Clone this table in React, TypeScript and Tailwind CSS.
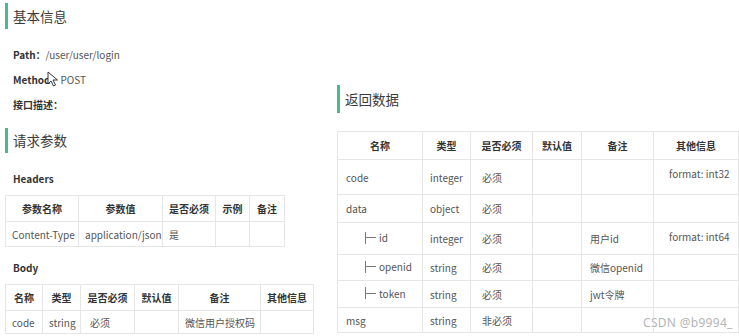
import React from 'react';

const font = { fontFamily: '"Noto Sans CJK SC", "Noto Sans", sans-serif' };

const SectionTitle: React.FC<{ children: React.ReactNode; className?: string }> = ({ children, className = '' }) => (
  <div className={`flex items-center border-l-[3px] border-[#4cb98c] pl-[5px] text-[13.5px] text-[#3a3a3a] ${className}`}>
    {children}
  </div>
);

const Branch: React.FC<{ label: string }> = ({ label }) => (
  <span className="inline-flex items-center pl-[19px]">
    <span className="inline-block h-[12px] w-px bg-[#777]" />
    <span className="inline-block h-px w-[10px] bg-[#777]" />
    <span className="ml-[3px]">{label}</span>
  </span>
);

const th = 'whitespace-nowrap border border-[#e6e6e6] p-0 text-center font-bold text-[#333]';
const td = 'whitespace-nowrap overflow-hidden border border-[#e6e6e6] px-[6px] py-0 text-left text-[#555]';

const headerRows = [['Content-Type', 'application/json', '是', '', '']];

type Field = { name: React.ReactNode; type: string; req: string; note: string; extra: string; h: string };

const responseRows: Field[] = [
  { name: 'code', type: 'integer', req: '必须', note: '', extra: 'format: int32', h: 'h-[35px]' },
  { name: 'data', type: 'object', req: '必须', note: '', extra: '', h: 'h-[28px]' },
  { name: <Branch label="id" />, type: 'integer', req: '必须', note: '用户id', extra: 'format: int64', h: 'h-[32px]' },
  { name: <Branch label="openid" />, type: 'string', req: '必须', note: '微信openid', extra: '', h: 'h-[26px]' },
  { name: <Branch label="token" />, type: 'string', req: '必须', note: 'jwt令牌', extra: '', h: 'h-[27px]' },
  { name: 'msg', type: 'string', req: '非必须', note: '', extra: '', h: 'h-[25px]' },
];

export default function App() {
  return (
    <div className="relative h-[336px] w-[739px] overflow-hidden bg-white text-[10px]" style={font}>
      <div className="flex">
        {/* left column: basic info + request params */}
        <div className="w-[337px] shrink-0 pl-[5px]">
          <SectionTitle className="mt-[3px] h-[26px]">基本信息</SectionTitle>
          <div className="mt-[13px] pl-[8px] text-[10px] text-[#555]">
            <div className="flex h-[25px] items-center">
              <span className="font-bold text-[#333]">Path：</span>
              <span>/user/user/login</span>
            </div>
            <div className="flex h-[25px] items-center">
              <span className="font-bold text-[#333]">Method：</span>
              <span>POST</span>
            </div>
            <div className="flex h-[25px] items-center">
              <span className="font-bold text-[#333]">接口描述：</span>
            </div>
          </div>

          <SectionTitle className="mt-[11px] h-[25px]">请求参数</SectionTitle>
          <div className="mt-[15px] flex h-[20px] items-center pl-[8px] font-bold text-[#333]">Headers</div>
          <table className="mt-[7px] w-[279px] table-fixed border-collapse">
            <colgroup>
              <col className="w-[73px]" />
              <col className="w-[84px]" />
              <col className="w-[53px]" />
              <col className="w-[34px]" />
              <col className="w-[35px]" />
            </colgroup>
            <thead>
              <tr className="h-[26px]">
                {['参数名称', '参数值', '是否必须', '示例', '备注'].map((c) => (
                  <th key={c} className={th}>{c}</th>
                ))}
              </tr>
            </thead>
            <tbody>
              {headerRows.map((r) => (
                <tr key={r[0]} className="h-[25px]">
                  {r.map((c, i) => (
                    <td key={i} className={td}>{c}</td>
                  ))}
                </tr>
              ))}
            </tbody>
          </table>

          <div className="mt-[10px] flex h-[20px] items-center pl-[8px] font-bold text-[#333]">Body</div>
          <table className="mt-[7px] w-[308px] table-fixed border-collapse">
            <colgroup>
              <col className="w-[37px]" />
              <col className="w-[38px]" />
              <col className="w-[54px]" />
              <col className="w-[44px]" />
              <col className="w-[82px]" />
              <col className="w-[53px]" />
            </colgroup>
            <thead>
              <tr className="h-[26px]">
                {['名称', '类型', '是否必须', '默认值', '备注', '其他信息'].map((c) => (
                  <th key={c} className={th}>{c}</th>
                ))}
              </tr>
            </thead>
            <tbody>
              <tr className="h-[23px]">
                <td className={td}>code</td>
                <td className={td}>string</td>
                <td className={`${td} pl-[9px]`}>必须</td>
                <td className={td}></td>
                <td className={`${td} text-center`}>微信用户授权码</td>
                <td className={td}></td>
              </tr>
            </tbody>
          </table>
        </div>

        {/* right column: response data */}
        <div className="flex-1">
          <SectionTitle className="mt-[85px] h-[28px]">返回数据</SectionTitle>
          <table className="mt-[18px] w-[401px] table-fixed border-collapse">
            <colgroup>
              <col className="w-[85px]" />
              <col className="w-[48px]" />
              <col className="w-[62px]" />
              <col className="w-[49px]" />
              <col className="w-[72px]" />
              <col className="w-[85px]" />
            </colgroup>
            <thead>
              <tr className="h-[28px]">
                {['名称', '类型', '是否必须', '默认值', '备注', '其他信息'].map((c) => (
                  <th key={c} className={th}>{c}</th>
                ))}
              </tr>
            </thead>
            <tbody>
              {responseRows.map((r, i) => (
                <tr key={i} className={r.h}>
                  <td className={`${td} pl-[8px]`}>{r.name}</td>
                  <td className={`${td} pl-[7px]`}>{r.type}</td>
                  <td className={`${td} pl-[11px]`}>{r.req}</td>
                  <td className={td}></td>
                  <td className={`${td} pl-[8px]`}>{r.note}</td>
                  <td className={`${td} pl-[15px] align-top pt-[6px]`}>{r.extra}</td>
                </tr>
              ))}
            </tbody>
          </table>
        </div>
      </div>

      {/* pointer cursor */}
      <svg className="absolute left-[47px] top-[71px]" width="12" height="16" viewBox="0 0 12 16">
        <path d="M1 1 L1 13 L4 10 L6.5 15 L8.5 14 L6 9 L10.5 9 Z" fill="#fff" stroke="#222" strokeWidth="0.9" strokeLinejoin="round" />
      </svg>

      {/* watermark */}
      <div
        className="absolute left-[643px] top-[314px] text-[12px] tracking-[0.3px] text-[#b5b5b5]"
        style={{ fontFamily: '"Noto Sans", sans-serif', textShadow: '0 0 2px #fff, 0 0 2px #fff' }}
      >
        CSDN @b9994_
      </div>
    </div>
  );
}
